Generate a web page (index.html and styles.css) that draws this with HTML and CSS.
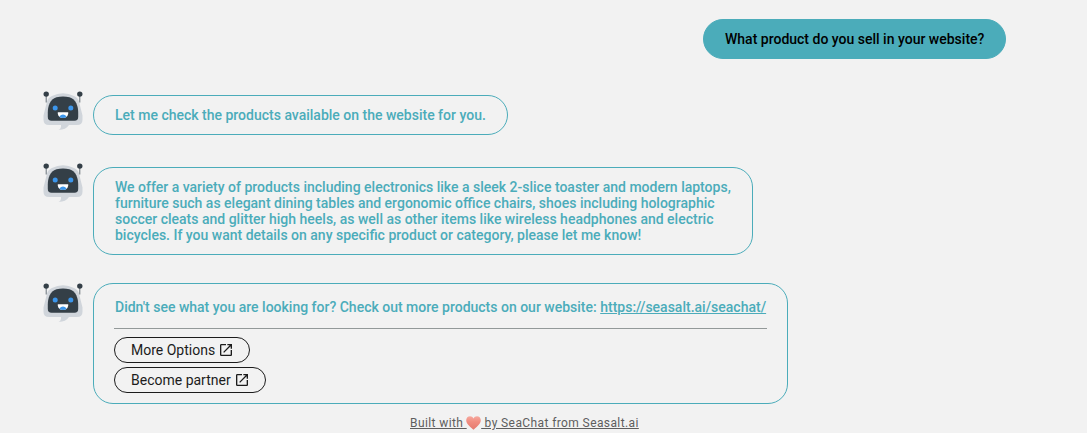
FILE: index.html
```html
<!DOCTYPE html>
<html lang="en">
<head>
<meta charset="utf-8">
<title>SeaChat</title>
<link rel="stylesheet" href="styles.css">
</head>
<body>
<svg class="defs" aria-hidden="true">
  <symbol id="bot" viewBox="0 0 40 40">
    <path class="bot-shell" d="M9 6Q20 .5 31 6Q35 7.500 36 11.500L39.500 25.500V29.500Q39.500 35 34 35H26Q23 39.800 15.500 40Q18.500 38.500 18 35H6Q.5 35 .5 29.500V25.500L4 11.500Q5 7.500 9 6Z"/>
    <path class="bot-antenna" d="M3.200 4V12.500M36.800 4V12.500"/>
    <circle class="bot-face" cx="3.200" cy="4.100" r="2.700"/>
    <circle class="bot-face" cx="36.800" cy="4.100" r="2.700"/>
    <path class="bot-face" d="M13.500 7.300Q20 5.700 26.500 7.300C33 9 35.200 16.500 35.200 22.500V27Q35.200 30.800 31.500 30.800H8.500Q4.800 30.800 4.800 27V22.500C4.800 16.500 7 9 13.500 7.300Z"/>
    <circle class="bot-blue" cx="12.200" cy="18" r="2.500"/>
    <circle class="bot-blue" cx="27.800" cy="18" r="2.500"/>
    <path class="bot-mouth" d="M14.800 22.200H25.200V23.700Q24.300 28 20 28T14.800 23.700Z"/>
    <path class="bot-blue" d="M16.300 26.400Q20 22.700 23.700 26.400Q22.300 28 20 28T16.300 26.400Z"/>
  </symbol>
  <symbol id="open" viewBox="0 0 24 24">
    <path d="M19 19H5V5h7V3H5a2 2 0 0 0-2 2v14a2 2 0 0 0 2 2h14c1.100 0 2-.9 2-2v-7h-2v7zM14 3v2h3.590l-9.830 9.830 1.410 1.410L19 6.410V10h2V3h-7z"/>
  </symbol>
  <linearGradient id="heart-fill" x1="0" y1="0" x2="0" y2="1">
    <stop offset="0" stop-color="#f6aaa0"/>
    <stop offset=".4" stop-color="#f18d80"/>
    <stop offset="1" stop-color="#e4796e"/>
  </linearGradient>
</svg>
<main class="chat">
  <div class="row row-user">
    <div class="bubble bubble-user">What product do you sell in your website?</div>
  </div>
  <div class="row row-status">
    <svg class="avatar"><use href="#bot"/></svg>
    <div class="bubble bubble-status">Let me check the products available on the website for you.</div>
  </div>
  <div class="row row-answer">
    <svg class="avatar"><use href="#bot"/></svg>
    <div class="bubble bubble-answer">We offer a variety of products including electronics like a sleek 2-slice toaster and modern laptops,<br>furniture such as elegant dining tables and ergonomic office chairs, shoes including holographic<br>soccer cleats and glitter high heels, as well as other items like wireless headphones and electric<br>bicycles. If you want details on any specific product or category, please let me know!</div>
  </div>
  <div class="row row-more">
    <svg class="avatar"><use href="#bot"/></svg>
    <div class="bubble bubble-more">
      <div class="message">Didn't see what you are looking for? Check out more products on our website: <a class="link" href="#">https://seasalt.ai/seachat/</a></div>
      <div class="options">
        <a class="option">More Options<svg class="open"><use href="#open"/></svg></a>
        <a class="option">Become partner<svg class="open"><use href="#open"/></svg></a>
      </div>
    </div>
  </div>
</main>
<footer class="footer"><a class="credit" href="#">Built with <svg class="heart" viewBox="0 0 15 14"><path fill="url(#heart-fill)" d="M7.500 13.800C5.500 11.800.2 8.500.2 4.300C.2 1.800 1.900.2 4 .2C5.600.2 6.800 1 7.500 2.400C8.200 1 9.400.2 11 .2C13.100.2 14.800 1.800 14.800 4.300C14.800 8.500 9.500 11.800 7.500 13.800Z"/></svg> by SeaChat from Seasalt.ai</a></footer>
</body>
</html>
```
FILE: styles.css
```css
* { box-sizing: border-box; }
body {
  margin: 0;
  height: 433px;
  overflow: hidden;
  background: #f2f2f2;
  font: 500 14px/16px Roboto, sans-serif;
}
.defs { position: absolute; width: 0; height: 0; }
.chat {
  display: flex;
  flex-direction: column;
  padding: 19px 81px 0 43px;
}
.row { display: flex; align-items: flex-start; }
.row-user { justify-content: flex-end; margin-bottom: 36px; }
.row-status { margin-bottom: 32px; }
.row-answer { margin-bottom: 28px; }
.avatar { width: 40px; height: 40px; margin: -5px 10px 0 0; flex: none; }
.row-more .avatar { margin-top: -1px; }
.bubble {
  border: 1px solid #4bacba;
  border-radius: 20px;
  padding: 11px 0 11px 21px;
  color: #4bacba;
  white-space: nowrap;
}
.bubble-user { width: 303px; background: #4bacba; color: #000; }
.bubble-status { width: 415px; }
.bubble-answer { width: 660px; }
.bubble-more { width: 695px; height: 121px; padding: 15px 20px 10px; }
.message { padding: 0 0 13px 1px; border-bottom: 1px solid #939999; }
.link { color: inherit; }
.options { display: flex; flex-direction: column; align-items: flex-start; gap: 4px; padding-top: 8px; }
.option {
  display: flex;
  align-items: center;
  gap: 3px;
  height: 26px;
  padding: 0 15px 0 16px;
  border: 1px solid #1c1c1c;
  border-radius: 13px;
  color: #1c1c1c;
  font-weight: 400;
}
.open { width: 16px; height: 16px; fill: #1c1c1c; }
.footer { padding: 11px 0 0 410px; font: 400 12px/16px Roboto, sans-serif; letter-spacing: .4px; white-space: nowrap; }
.credit { color: #5e5e5e; }
.heart { width: 15px; height: 14px; margin-left: -.5px; vertical-align: -3px; }
.bot-shell { fill: #d0d5db; }
.bot-face { fill: #343f47; }
.bot-antenna { fill: none; stroke: #68727a; stroke-width: 1; }
.bot-blue { fill: #3c96eb; }
.bot-mouth { fill: #fff; }
```
